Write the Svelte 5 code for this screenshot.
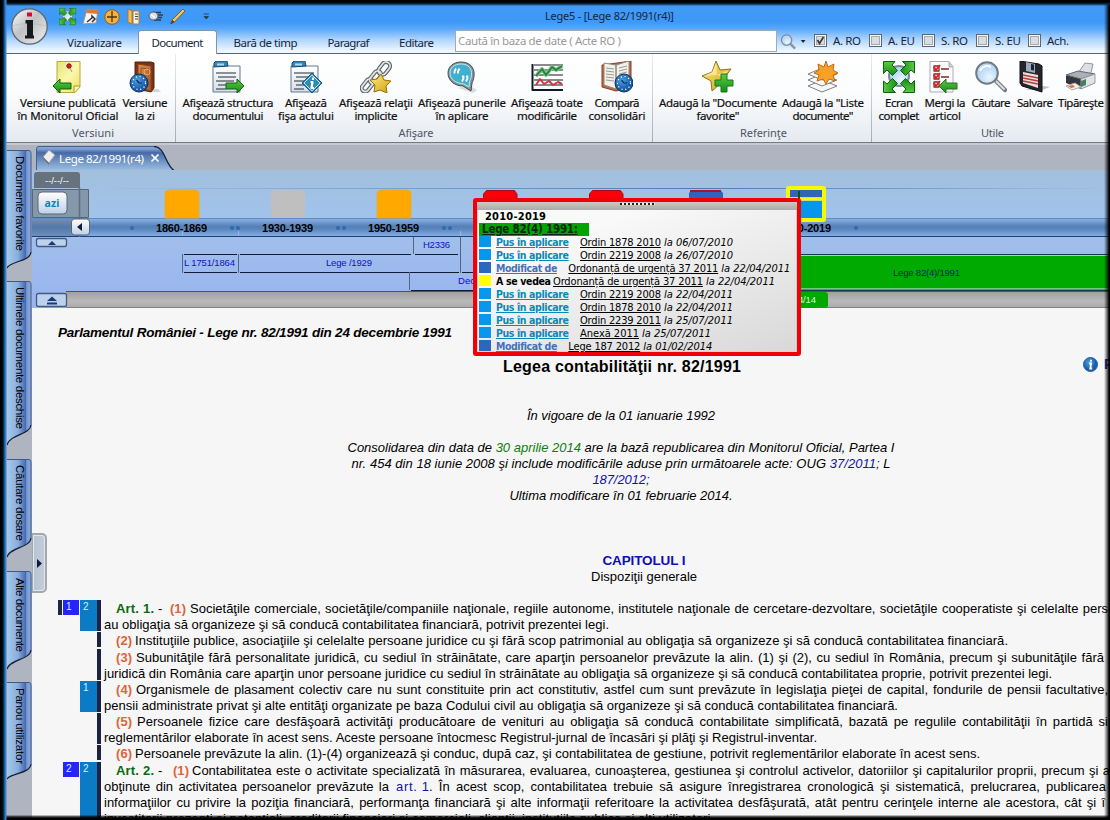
<script>
  // Stretches a text run to a set width, through letter or word spacing.
  function fit(node, opt) {
    const { w, by } = typeof opt === 'number' ? { w: opt, by: 'letter' } : opt;
    const text = node.textContent.trim();
    const diff = w - node.getBoundingClientRect().width;
    if (by === 'word') {
      node.style.wordSpacing = diff / (text.split(/\s+/).length - 1) + 'px';
    } else {
      const s = diff / Math.max(1, text.length - 1);
      node.style.letterSpacing = s + 'px';
      node.style.marginRight = -s + 'px';
    }
  }

  const groups = [
    { cls: 'g1', name: 'Versiuni', nw: 42, items: [
      { w: 108, icon: 'note', l: [['Versiune publicată', 96], ['în Monitorul Oficial', 101]] },
      { w: 46, icon: 'door', l: [['Versiune', 45], ['la zi', 20]] } ] },
    { cls: 'g2', name: 'Afişare', nw: 35, items: [
      { w: 94, icon: 'docArrow', l: [['Afişează structura', 91], ['documentului', 71]] },
      { w: 62, icon: 'docInfo', l: [['Afişează', 42], ['fişa actului', 56]] },
      { w: 78, icon: 'chain', l: [['Afişează relaţii', 74], ['implicite', 43]] },
      { w: 94, icon: 'quote', l: [['Afişează punerile', 88], ['în aplicare', 53]] },
      { w: 76, icon: 'chart', l: [['Afişează toate', 72], ['modificările', 60]] },
      { w: 64, icon: 'book', l: [['Compară', 45], ['consolidări', 57]] } ] },
    { cls: 'g3', name: 'Referinţe', nw: 47, items: [
      { w: 124, icon: 'starPlus', l: [['Adaugă la "Documente', 118], ['favorite"', 43]] },
      { w: 86, icon: 'stack', l: [['Adaugă la "Liste', 82], ['documente"', 61]] } ] },
    { cls: 'g4', name: 'Utile', nw: 23, items: [
      { w: 46, icon: 'expand', l: [['Ecran', 28], ['complet', 41]] },
      { w: 46, icon: 'checks', l: [['Mergi la', 41], ['articol', 32]] },
      { w: 46, icon: 'lens', l: [['Căutare', 39]] },
      { w: 42, icon: 'floppy', l: [['Salvare', 36]] },
      { w: 50, icon: 'printer', l: [['Tipăreşte', 46]] } ] }
  ];

  const tabs = [
    { t: 'Vizualizare', w: 87, f: 55 },
    { t: 'Document', w: 79, f: 52, on: true },
    { t: 'Bară de timp', w: 97, f: 64 },
    { t: 'Paragraf', w: 69, f: 42 },
    { t: 'Editare', w: 67, f: 35 }
  ];

  const checks = [
    { t: 'A. RO', f: 28, w: 55, on: true },
    { t: 'A. EU', f: 27, w: 53 },
    { t: 'S. RO', f: 27, w: 54 },
    { t: 'S. EU', f: 26, w: 52 },
    { t: 'Ach.', f: 22, w: 42 }
  ];

  const rail = [
    { t: 'Documente favorite', gap: 6, h: 119, s: 102, y: 6, f: 95 },
    { t: 'Ultimele documente deschise', gap: 12, h: 165, s: 144, y: 6, f: 142 },
    { t: 'Căutare dosare', gap: 13, h: 99, s: 79, y: 6, f: 76 },
    { t: 'Alte documente', gap: 13, h: 99, s: 79, y: 7, f: 74 },
    { t: 'Panou utilizator', gap: 12, h: 98, s: 82, y: 6, f: 76 }
  ];

  const refs = [
    ['pus', 'Ordin 1878 2010', 81, '06/07/2010'],
    ['pus', 'Ordin 2219 2008', 81, '26/07/2010'],
    ['mod', 'Ordonanță de urgență 37 2011', 150, '22/04/2011'],
    ['see', 'Ordonanță de urgență 37 2011', 150, '22/04/2011'],
    ['pus', 'Ordin 2219 2008', 81, '22/04/2011'],
    ['pus', 'Ordin 1878 2010', 81, '22/04/2011'],
    ['pus', 'Ordin 2239 2011', 81, '25/07/2011'],
    ['pus', 'Anexă 2011', 59, '25/07/2011'],
    ['mod', 'Lege 187 2012', 72, '01/02/2014']
  ];
  const kinds = {
    pus: { t: 'Pus în aplicare', f: 73, gap: 11 },
    mod: { t: 'Modificat de', f: 61, gap: 11 },
    see: { t: 'A se vedea', f: 55, gap: 2 }
  };

  const paras = [
    { h: 32, gap: 0, b: [1, 2], bar: true, lines: [
      { art: 'Art. 1.', aw: 38, n: '(1)', nx: 53, x: 74, w: 918, by: 'word', t: 'Societăţile comerciale, societăţile/companiile naţionale, regiile autonome, institutele naţionale de cercetare-dezvoltare, societăţile cooperatiste şi celelalte pers' },
      { w: 505, t: 'au obligaţia să organizeze şi să conducă contabilitatea financiară, potrivit prezentei legi.' }] },
    { h: 16, gap: 1, lines: [{ n: '(2)', x: 19, w: 873, t: 'Instituţiile publice, asociaţiile şi celelalte persoane juridice cu şi fără scop patrimonial au obligaţia să organizeze şi să conducă contabilitatea financiară.' }] },
    { h: 32, gap: 0, lines: [
      { n: '(3)', x: 20, w: 968, by: 'word', t: 'Subunităţile fără personalitate juridică, cu sediul în străinătate, care aparţin persoanelor prevăzute la alin. (1) şi (2), cu sediul în România, precum şi subunităţile fără' },
      { w: 948, t: 'juridică din România care aparţin unor persoane juridice cu sediul în străinătate au obligaţia să organizeze şi să conducă contabilitatea proprie, potrivit prezentei legi.' }] },
    { h: 32, gap: 0, b: [0, 1], lines: [
      { n: '(4)', x: 20, w: 972, by: 'word', t: 'Organismele de plasament colectiv care nu sunt constituite prin act constitutiv, astfel cum sunt prevăzute în legislaţia pieţei de capital, fondurile de pensii facultative,' },
      { w: 794, t: 'pensii administrate privat şi alte entităţi organizate pe baza Codului civil au obligaţia să organizeze şi să conducă contabilitatea financiară.' }] },
    { h: 32, gap: 0, lines: [
      { n: '(5)', x: 21, w: 971, by: 'word', t: 'Persoanele fizice care desfăşoară activităţi producătoare de venituri au obligaţia să conducă contabilitate simplificată, bazată pe regulile contabilităţii în partidă si' },
      { w: 713, t: 'reglementărilor elaborate în acest sens. Aceste persoane întocmesc Registrul-jurnal de încasări şi plăţi şi Registrul-inventar.' }] },
    { h: 16, gap: 1, lines: [{ n: '(6)', x: 19, w: 845, t: 'Persoanele prevăzute la alin. (1)-(4) organizează şi conduc, după caz, şi contabilitatea de gestiune, potrivit reglementărilor elaborate în acest sens.' }] },
    { h: 64, gap: 0, b: [2, 2], lines: [
      { art: 'Art. 2.', aw: 38, n: '(1)', nx: 56, x: 76, w: 918, by: 'word', t: 'Contabilitatea este o activitate specializată în măsurarea, evaluarea, cunoaşterea, gestiunea şi controlul activelor, datoriilor şi capitalurilor proprii, precum şi a' },
      { parts: [[285, 'obţinute din activitatea persoanelor prevăzute la'], [33, 'art. 1', 7], [677, '. În acest scop, contabilitatea trebuie să asigure înregistrarea cronologică şi sistematică, prelucrarea, publicarea']] },
      { w: 1001, by: 'word', t: 'informaţiilor cu privire la poziţia financiară, performanţa financiară şi alte informaţii referitoare la activitatea desfăşurată, atât pentru cerinţele interne ale acestora, cât şi î' },
      { w: 610, t: 'investitorii prezenţi şi potenţiali, creditorii financiari şi comerciali, clienţii, instituţiile publice şi alţi utilizatori.' }] }
  ];
</script>

{#snippet fourArrows()}
  <circle cx="16" cy="15" r="10" fill="url(#glass)" stroke="#7b8794" stroke-width="2" />
  {#each [0, 90, 180, 270] as a}
    <path transform="rotate({a} 16 16)" d="M.500 .500H12L9 4l5.500 5.500-5 5L4 9 .500 12.500z" fill="url(#grn)" stroke="#0b650e" />
  {/each}
{/snippet}

{#snippet clock(x, y, r)}
  <circle cx={x} cy={y} r={r} fill="url(#ball)" stroke="#0b3260" />
  <circle cx={x} cy={y} r={r - 2.5} fill="none" stroke="#fff" stroke-width="1.2" stroke-dasharray="1.2 2.6" />
  <path d="M{x - 2.5} {y - 3}L{x} {y}h3" fill="none" stroke="#092c5c" stroke-width="1.2" />
{/snippet}

{#snippet sheet()}
  <path d="M1 5h27v26H1z" fill="url(#paper)" stroke="#65778b" />
  <path d="M2 6V2l2-2h11l1 5z" fill="#3685b9" stroke="#164c78" />
  <path d="M5 3.5h7" stroke="#a9daf0" stroke-width="2" />
  <path d="M4 12h20M6 16h18M4 20h18M6 24h14M4 28h10" stroke="#252d36" stroke-width="1.2" />
{/snippet}

{#snippet icon(name)}
  <svg class="ico" width="32" height="32" viewBox="0 0 32 32" fill="none" stroke-linejoin="round">
    {#if name === 'note'}
      <path d="M5 0.5h23V26l-5 5.5H5z" fill="url(#yel)" stroke="#b6a838" />
      <path d="M28 25h-6v6" fill="#fffbc4" stroke="#a89627" />
      <circle cx="17" cy="5" r="2.2" fill="#d4202a" stroke="#861017" /><path d="M18 7l2 4" stroke="#999" />
      <path d="M1 25l7-7v4h11v6H8v4z" fill="url(#grn)" stroke="#12610f" />
    {:else if name === 'door'}
      <path d="M10 28h19l3 3H12z" fill="#999" opacity=".4" />
      <path d="M6 1l16 0 3 1v25l-3 4-16-4z" fill="#723519" stroke="#53240f" />
      <path d="M9 3l13 2v25L9 26z" fill="url(#wood)" stroke="#884319" />
      <path d="M12 7l8 1v7l-8-1zM14 17l6 1v7l-6-1z" stroke="#9a5426" /><circle cx="18" cy="11" r="3" stroke="#efaa70" />
      {@render clock(10, 22, 9)}
    {:else if name === 'docArrow'}
      {@render sheet()}
      <path d="M32 25l-7-7v4H14v6h11v4z" fill="url(#grn)" stroke="#12610f" />
    {:else if name === 'docInfo'}
      {@render sheet()}
      <path d="M22 12l10 10-10 10-10-10z" fill="#3189b7" stroke="#15577f" /><path d="M22 14l8 8-8 8-8-8z" stroke="#bce4f3" />
      <path d="M23 16.5v2.5M20.5 21h2l-1 6h2.5" stroke="#fff" stroke-width="2.2" />
    {:else if name === 'chain'}
      <g stroke="#5d6468" stroke-width="4"><rect x="20" y="1" width="8" height="14" rx="4" transform="rotate(38 25 8)" /><rect x="12" y="9" width="7" height="14" rx="3.500" transform="rotate(38 15 16)" /><rect x="4" y="17" width="7" height="14" rx="3.500" transform="rotate(38 7 24)" /></g>
      <g stroke="#dfe4e6" stroke-width="1.800"><rect x="20" y="1" width="8" height="14" rx="4" transform="rotate(38 25 8)" /><rect x="12" y="9" width="7" height="14" rx="3.500" transform="rotate(38 15 16)" /><rect x="4" y="17" width="7" height="14" rx="3.500" transform="rotate(38 7 24)" /></g>
      <path d="M21 13l3 6 7 1-5 5 1 7-7-3-6 2 1-7-5-5 7-1z" fill="url(#gold)" stroke="#967000" />
    {:else if name === 'quote'}
      <path d="M12 27l15 5 4-3-8-5z" fill="#aaa" opacity=".4" />
      <path d="M15 1c9 0 14 6 13 14-.5 3-1 5-2 7l-1 8-8-5C8 25 2 19 2 12 2 6 7 1 15 1z" fill="#87939b" stroke="#414e58" />
      <path d="M15 3c8 0 11 5 10.500 11-.5 4-1.500 5-2 7l-.5 5-5-3C9 22 4 18 4 12 4 7 8 3 15 3z" fill="#3fb0cd" stroke="#c6e7ed" />
      <path d="M10 7.500l-1.500 3v2M13.500 7.500l-1.500 3v2M16 15.500h1.500v2l-1.500 3M20 15.500h1.500v2l-1.500 3" stroke="#fff" stroke-width="1.800" />
    {:else if name === 'chart'}
      <path d="M3 4h29M3 9h29M3 14h29M3 19h29M3 24h29" stroke="#15191c" stroke-width="1.200" />
      <path d="M1.500 3v26H32" stroke="#111827" stroke-width="2" />
      <path d="M5 15l6-7 4 6 6-8 4 3 6-4" stroke="#7fc48d" stroke-width="4" /><path d="M5 15l6-7 4 6 6-8 4 3 6-4" stroke="#23833d" stroke-width="1.800" /><path d="M5 24l4-6 4 5 5-3 4 4 5-3 4 2" stroke="#cb3943" stroke-width="2" />
    {:else if name === 'book'}
      <path d="M1 4l15-2 14-2v26l-15 4L1 26z" fill="#c16843" stroke="#80412b" />
      <path d="M3 2l12 2v24L3 24zM15 4l13-4v23l-13 5z" fill="#f3f0e7" stroke="#8b887e" />
      <path d="M5 7l8 1M5 10l8 1M5 13l8 1M5 16l8 1M5 19l8 1M18 7l8-2M18 10l8-2M18 13l8-2" stroke="#999" />
      {@render clock(23, 22, 9)}
    {:else if name === 'starPlus'}
      <path d="M14 0l4 9 11-1-6 8 4 9-9-2-8 7-1-10-9-5 10-4z" fill="url(#gold)" stroke="#8c711b" />
      <path d="M14 2l1 12-13 1 8-4zM15 14l12-5-6 7z" fill="#fff8bd" opacity=".6" />
      <path d="M19 13h6v6h6v6h-6v6h-6v-6h-6v-6h6z" fill="url(#grn)" stroke="#137d18" />
    {:else if name === 'stack'}
      {#each [11, 5, -1] as y}<path d="M1 {14 + y}l14-6 15 6-15 6z" fill="#f8f8f8" stroke="#7e8284" />{/each}
      <path d="M19 0l2 6 6-3-1 6 5 3-5 2 2 6-6-2-3 5-3-5-6 2 2-6-5-2 5-3-1-6 6 3z" fill="#f8a126" stroke="#c26912" />
    {:else if name === 'expand'}
      {@render fourArrows()}
    {:else if name === 'checks'}
      <path d="M1 0.500h19l4 5V31H1z" fill="#fbfbfc" stroke="#a9adb3" /><path d="M20 1v5h4" fill="#ccc" stroke="#aaa" />
      {#each [5, 13, 21] as y}<path d="M5 {y}h5v5H5zM12 {y + 3}h8" stroke="#8d2626" stroke-width="1.300" /><path d="M5 {y + 1}l2 3 4-5" stroke="#e31d24" stroke-width="1.800" />{/each}
      <path d="M10 25l7-7v4h11v6H17v4z" fill="url(#grn)" stroke="#2d6b20" />
    {:else if name === 'lens'}
      <path d="M21 20l9 9" stroke="#777e85" stroke-width="4.500" stroke-linecap="round" /><path d="M21 20l8.500 8.500" stroke="#dcdfe2" stroke-width="2" />
      <circle cx="12" cy="12" r="10.800" fill="url(#glass)" stroke="#6f7a86" stroke-width="2" /><path d="M5 10c2-5 7-6 11-4" stroke="#fff" stroke-width="2" />
    {:else if name === 'floppy'}
      <path d="M6 29h17l8-3-7-1z" fill="#888" opacity=".5" />
      <path d="M1 0l19 3 3 2v26L3 25 1 22z" fill="#23262c" stroke="#0f1013" /><path d="M7 1l9 2v9L7 10z" fill="#9daabe" /><path d="M12 3l3 .5v6l-3-.5z" fill="#222" />
      <path d="M4 11l15 3v13L4 22z" fill="#e9e0dd" /><path d="M4 14l15 3M4 17l15 3M4 20l15 3" stroke="#ba3d38" stroke-width="1.600" />
    {:else}
      <path d="M13 12l7-10 8 1-3 13z" fill="#dce0e5" stroke="#92979e" /><path d="M1 15l12-4 17 4v7l-14 6L1 22z" fill="#33373d" />
      <path d="M1 14l12-4 17 3-14 5z" fill="#abb0b8" stroke="#63666e" /><path d="M16 18l14-5v9l-14 6z" fill="#e0e2e5" stroke="#9a9da2" /><path d="M16 20l5-2v6l-5 2z" fill="#4b7d5e" />
      <path d="M1 25l9-3 6 4-9 3z" fill="#f7f0e8" stroke="#aaa" /><path d="M3 25l5-1 2 2-4 1z" fill="#ee682b" />
    {/if}
  </svg>
{/snippet}

<div class="app">
  <svg class="defs" width="0" height="0" aria-hidden="true">
    <defs>
      <linearGradient id="yel" x2="1" y2="1"><stop stop-color="#e6e277" /><stop offset=".5" stop-color="#fbf8ad" /><stop offset="1" stop-color="#eadf62" /></linearGradient>
      <linearGradient id="grn" x2="0" y2="1"><stop stop-color="#5ccc44" /><stop offset="1" stop-color="#168a17" /></linearGradient>
      <linearGradient id="wood" x2="1" y2="1"><stop stop-color="#d98d52" /><stop offset="1" stop-color="#ad5b27" /></linearGradient>
      <linearGradient id="gold" x2="1" y2="1"><stop stop-color="#ffee80" /><stop offset="1" stop-color="#cf9d13" /></linearGradient>
      <linearGradient id="paper" x2="0" y2="1"><stop stop-color="#fff" /><stop offset="1" stop-color="#d5dde6" /></linearGradient>
      <radialGradient id="ball" cx=".4" cy=".35"><stop stop-color="#49a2e5" /><stop offset="1" stop-color="#1a5ba4" /></radialGradient>
      <radialGradient id="glass" cx=".6" cy=".7"><stop stop-color="#e9f6ff" /><stop offset="1" stop-color="#b8d8f5" /></radialGradient>
      <linearGradient id="silver" x2="1" y2="1"><stop stop-color="#fff" /><stop offset=".45" stop-color="#bfc1c4" /><stop offset="1" stop-color="#efefef" /></linearGradient>
      <linearGradient id="sky" x2="0" y2="1"><stop stop-color="#a2bfdd" /><stop offset="1" stop-color="#a1c4ec" /></linearGradient>
      <linearGradient id="band" x2="0" y2="1"><stop stop-color="#91b6e8" /><stop offset=".45" stop-color="#5380b7" /><stop offset=".6" stop-color="#5c88c0" /><stop offset="1" stop-color="#8bb2e9" /></linearGradient>
      <linearGradient id="low" x2="0" y2="1"><stop stop-color="#a1bfea" /><stop offset="1" stop-color="#9ab6f0" /></linearGradient>
      <linearGradient id="scroll" x2="0" y2="1"><stop stop-color="#9e9e9e" /><stop offset=".6" stop-color="#b9b9b9" /><stop offset="1" stop-color="#aaa" /></linearGradient>
      <linearGradient id="side"><stop stop-color="#a6c8ea" /><stop offset=".45" stop-color="#8aaede" /><stop offset=".78" stop-color="#4669ac" /><stop offset=".82" stop-color="#7798d4" /><stop offset="1" stop-color="#8aaae0" /></linearGradient>
      <linearGradient id="doctab" x2="0" y2="1"><stop stop-color="#8cadde" /><stop offset=".12" stop-color="#7998cc" /><stop offset=".25" stop-color="#476ba8" /><stop offset="1" stop-color="#9fc1e4" /></linearGradient>
      <linearGradient id="btn" x2="0" y2="1"><stop stop-color="#fff" /><stop offset="1" stop-color="#bed0e6" /></linearGradient>
      <linearGradient id="fade"><stop stop-color="#a2c1e2" /><stop offset=".35" stop-color="#6f9cce" /><stop offset=".6" stop-color="#4c7db8" /><stop offset=".75" stop-color="#6895c9" /><stop offset="1" stop-color="#a2c1e2" /></linearGradient>
    </defs>
  </svg>

  <header>
    <svg class="logo" width="38" height="38" viewBox="0 0 38 38">
      <circle cx="19.500" cy="19.500" r="17.700" fill="url(#silver)" stroke="#5c6773" stroke-width="1.300" />
      <path d="M2 19q17-5 34 0" stroke="#aaa" fill="none" opacity=".4" />
      <path d="M17 5.500h5v4h-5z" fill="#d7092e" /><path d="M15.500 13h7.500v18.500h-6V16.500h-1.500zM15 28.500h9v3h-9z" fill="#17181b" />
    </svg>
    <div class="quick">
      <svg width="156" height="18" viewBox="0 0 156 18" fill="none">
        <g transform="scale(.53)">{@render fourArrows()}</g>
        <g transform="translate(23 0)"><path d="M5 1l11 1-2 13-13 1z" fill="#f6f6f4" stroke="#999" /><path d="M5 1l11 1v4L4 5z" fill="#db7a31" /><path d="M5 14l5-4V8l3 3-3 3" stroke="#333" stroke-width="1.500" /></g>
        <g transform="translate(45 1)"><circle cx="8" cy="8" r="7.300" fill="#f5b13c" stroke="#9b5912" /><path d="M8 2v11M3 8h10" stroke="#4c340d" stroke-width="1.300" /></g>
        <g transform="translate(68 0)"><path d="M1 1l4 2v13l-4-2z" fill="#f6c164" stroke="#b97414" /><path d="M6 3h6v13H6z" fill="#f6f2ea" stroke="#bb7820" /><path d="M8 6h3M8 8.500h3M8 11h3" stroke="#444" /></g>
        <g transform="translate(89 1)"><path d="M5 3.500h8M4 6h11M8 8.500h6M6 11h7" stroke="#333b45" stroke-width="1.500" /><ellipse cx="5.500" cy="7" rx="4.500" ry="4" fill="#d8dce0" stroke="#59616a" /><path d="M3 5.500l4 3" stroke="#fff" stroke-width="1.500" /></g>
        <g transform="translate(111 1)"><path d="M.500 15l2-4.500L13 0l2 2L4.500 13z" fill="#f2c469" stroke="#805d25" /><path d="M.500 15l2-4 2 2z" fill="#4a3b25" /></g>
        <path d="M144.500 7h5.500M145 9.500h4.500l-2.200 2.500z" stroke="#29394d" fill="#29394d" stroke-width=".8" transform="translate(0 -1)" />
      </svg>
      <span class="title"><span use:fit={129}>Lege5 - [Lege 82/1991(r4)]</span></span>
    </div>
    <div class="tabs">
      {#each tabs as t}<div class="tab" class:on={t.on} style:width="{t.w}px"><span use:fit={t.f}>{t.t}</span></div>{/each}
      <div class="search"><span use:fit={163}>Caută în baza de date ( Acte RO )</span></div>
      <svg class="find" width="36" height="18" viewBox="0 0 36 18"><path d="M10 10l6 6" stroke="#8a95a3" stroke-width="2.500" /><circle cx="7" cy="7" r="5.500" fill="url(#glass)" stroke="#7b8aa0" stroke-width="1.300" /><path d="M22 7h5l-2.500 3z" fill="#222" /></svg>
      {#each checks as c}
        <div class="chk" style:width="{c.w}px"><i>{#if c.on}<svg width="9" height="9" viewBox="0 0 9 9"><path d="M1.500 4l2 3.500L7.500 1" fill="none" stroke="#333" stroke-width="1.600" /></svg>{/if}</i><span use:fit={c.f}>{c.t}</span></div>
      {/each}
    </div>
  </header>

  <section class="ribbon">
    {#each groups as g}
      <div class="group {g.cls}">
        <div class="btns">
          {#each g.items as b}
            <div class="rb" style:width="{b.w}px">{@render icon(b.icon)}{#each b.l as [t, w]}<div class="lb"><span use:fit={w}>{t}</span></div>{/each}</div>
          {/each}
        </div>
        <div class="gname"><span use:fit={g.nw}>{g.name}</span></div>
      </div>
    {/each}
  </section>

  <div class="work">
    <nav class="rail">
      {#each rail as r}
        <svg width="25" height={r.h} style:margin-top="{r.gap}px">
          <path d="M0 .5H22q2 0 2 3V{r.s}c-1 10-21 9-24 {r.h - r.s - 1}z" fill="url(#side)" />
          <path d="M0 .5H22q2 0 2 3V{r.s}" fill="none" stroke="#405a85" /><path d="M24 {r.s}c-1 10-21 9-24 {r.h - r.s - 1}" fill="none" stroke="#111c33" stroke-width="1.200" />
          <text transform="translate(8.500 {r.y}) rotate(90)" textLength={r.f} font-size="11.500">{r.t}</text>
        </svg>
      {/each}
    </nav>

    <main>
      <div class="strip">
        <svg width="142" height="25" viewBox="0 0 142 25">
          <path d="M.5 25V3Q.5.500 3 .5H118c11 0 11 18 20 24z" fill="url(#doctab)" />
          <path d="M.5 25V3Q.5.500 3 .5H118" fill="none" stroke="#43628f" /><path d="M118 .5c11 0 11 18 20 24" fill="none" stroke="#15213a" stroke-width="1.300" />
          <path d="M7 11l6-7 6 5-6 8z" fill="#eee" stroke="#9a9a9a" /><path d="M7 11l6 6v2l-6-6z" fill="#777" />
          <text x="23" y="16.500" textLength="85" font-size="11.500" fill="#fff" class="noto">Lege 82/1991(r4)</text>
          <path d="M115.500 8.500l7 7M122.500 8.500l-7 7" stroke="#fff" stroke-width="1.700" />
        </svg>
      </div>

      <svg class="timeline" width="1078" height="138" viewBox="32 170 1078 138">
        <rect x="32" y="170" width="1078" height="49" fill="url(#sky)" /><rect x="89" y="188" width="1021" height="1" fill="url(#fade)" />
        <rect x="32" y="218" width="1078" height="19" fill="url(#band)" /><path d="M32 218.500H1110" stroke="#5b8bc4" /><path d="M32 236.500H1110" stroke="#1c4379" />
        <rect x="32" y="237" width="1078" height="55" fill="url(#low)" />
        <rect x="32" y="292" width="40" height="16" fill="#9ab6f0" /><rect x="66" y="291" width="1044" height="17" fill="url(#scroll)" /><path d="M66 291.500H1110M66 308H1110" stroke="#545454" />
        <path d="M34 188v-13q0-3 3-3h40q3 0 3 3v13z" fill="#66727e" />
        <path d="M32.500 189.500h56v28h-56z" fill="#8597ab" stroke="#5b6675" /><path d="M32 219h48v17H32z" fill="#58759e" opacity=".55" /><path d="M79.500 187v50" stroke="#626e7e" stroke-width="1.500" />
        <text x="45" y="183.500" textLength="24" font-size="9.500" fill="#fff">--/--/--</text>
        <rect x="38" y="192" width="29" height="22" rx="4" fill="url(#btn)" stroke="#5b6878" /><text x="44.500" y="207" textLength="15" font-size="10.500" font-weight="700" fill="#0b86ac" class="noto">azi</text>
        <rect x="71.500" y="219" width="18" height="16" rx="3" fill="url(#btn)" stroke="#566577" /><path d="M82 223v8l-5-4z" fill="#111d35" />
        {#each [[239, 8], [294, 13]] as [y, h]}<rect x="36.500" y={y - .5} width="30" height={h} rx="2" fill="#bdd0ec" stroke="#425b80" stroke-width="1.300" />{/each}
        <path d="M48 245h8l-4-4zM47 301h10l-5-4.500zM47 302.500h10v2h-10z" fill="#163b73" />

        <path d="M165 218v-24q0-4 4-4h26q4 0 4 4v24zM377 218v-24q0-4 4-4h26q4 0 4 4v24z" fill="#ffa800" stroke="#dfae37" />
        <path d="M271 218v-24q0-4 4-4h26q4 0 4 4v24z" fill="#bfbfbf" />
        <path d="M483.500 206v-12l3-3.500h28l2.500 3.500v12zM589.500 206v-12l3-3.500h28l2.500 3.500v12z" fill="#fb0007" stroke="#a80d18" />
        <path d="M689 206v-13l3-3h28l3 3v13z" fill="#3263bb" /><path d="M690 191h31" stroke="#a8132a" stroke-width="2" />
        <rect x="788" y="188" width="36" height="32" fill="none" stroke="#f6f900" stroke-width="4" rx="1" />
        <path d="M790 190h32v7h-32z" fill="#3065b5" /><path d="M788 199h36" stroke="#f6f900" stroke-width="3" /><path d="M790 201h32v17h-32z" fill="#0795ef" /><path d="M799 191v10" stroke="#07590a" stroke-width="2" />
        <g font-size="11" font-weight="700"><text x="156" y="231.500" textLength="51">1860-1869</text><text x="262" y="231.500" textLength="51">1930-1939</text><text x="368" y="231.500" textLength="51">1950-1959</text><text x="780" y="231.500" textLength="51">2010-2019</text></g>
        {#each [132, 232, 238, 338, 344, 444, 450, 856] as x}<circle cx={x} cy="228" r="2" fill="#3168b2" />{/each}
        <path d="M184 254.500h53M184 272.500h53M240 254.500h171M415 254.500h43M240 272.500h219M411 290.500h70M462 272.500h20" stroke="#111c34" />
        <path d="M182.500 254v19M238.500 254v19M413.500 237v17M460.500 237v36M409.500 272v18" stroke="#53667f" />
        <path d="M182.500 231v4M238.500 231v4M411 231v4M460.500 231v5" stroke="#c8b7ea" opacity=".7" />
        <g font-size="9.500" fill="#1010c8"><text x="184" y="266" textLength="51">L 1751/1864</text><text x="326" y="266" textLength="46">Lege /1929</text><text x="423" y="248" textLength="27">H2336</text><text x="458" y="284" textLength="17">Dec</text></g>
        <path d="M790 255h320v35H790z" fill="#00aa00" /><path d="M790 254.500h320M790 290.500h320" stroke="#183953" /><path d="M790 255.500h320M790 288.800h320" stroke="#9fdcae" />
        <text x="893" y="275.500" textLength="67" font-size="9.500" fill="#062b58">Lege 82(4)/1991</text>
        <path d="M780 292h45q3 0 3 3v10q0 3-3 3h-45z" fill="#00a900" /><text x="798" y="303" textLength="18" font-size="9.500" fill="#d5ffd0">4/14</text>
      </svg>

      <article>
        <div class="ln src"><span use:fit={394}>Parlamentul României - Lege nr. 82/1991 din 24 decembrie 1991</span></div>
        <div class="ln head"><span use:fit={238}>Legea contabilităţii nr. 82/1991</span>
          <div class="info"><svg width="15" height="15" viewBox="0 0 15 15"><circle cx="7.500" cy="7.500" r="7" fill="url(#ball)" stroke="#1c64ad" /><path d="M8 2.800v2M6 6.500h2.200l-1 5h2" fill="none" stroke="#fff" stroke-width="1.800" /></svg><b>P</b></div>
        </div>
        <div class="ln ital v"><span use:fit={188}>În vigoare de la 01 ianuarie 1992</span></div>
        <div class="ln ital c"><span use:fit={547}>Consolidarea din data de <em class="gr">30 aprilie 2014</em> are la bază republicarea din Monitorul Oficial, Partea I</span></div>
        <div class="ln ital"><span use:fit={539}>nr. 454 din 18 iunie 2008 şi include modificările aduse prin următoarele acte: OUG <em class="bl">37/2011;</em> L</span></div>
        <div class="ln ital bl"><span use:fit={57}>187/2012;</span></div>
        <div class="ln ital"><span use:fit={223}>Ultima modificare în 01 februarie 2014.</span></div>
        <div class="ln cap"><span use:fit={83}>CAPITOLUL I</span></div>
        <div class="ln disp"><span use:fit={106}>Dispoziţii generale</span></div>

        <div class="paras">
          {#each paras as p}
            <div class="para" style:height="{p.h}px" style:margin-bottom="{p.gap}px">
              <div class="marks">
                <i class="edge" class:show={p.bar}></i>
                <b class="m1" class:show={p.b && p.b[0]}>{p.b ? p.b[0] || '' : ''}</b>
                <b class="m2" class:show={p.b}>{p.b ? p.b[1] : ''}</b>
                <i class="bar"></i>
              </div>
              <div class="txt">
                {#each p.lines as l}
                  <div class="tl">
                    {#if l.parts}
                      {#each l.parts as [w, t, gap]}<span class:bl={gap} style:margin-left="{gap || 0}px" use:fit={{ w, by: gap ? 'letter' : 'word' }}>{t}</span>{/each}
                    {:else}
                      {#if l.n}
                        <div class="lead" style:width="{l.x + 12}px">
                          {#if l.art}<b class="art"><span use:fit={l.aw}>{l.art}</span></b><span class="dash">-</span>{/if}
                          <b class="num" style:margin-left={l.art ? 'auto' : '0'} style:margin-right={l.art ? l.x - l.nx - 17 + 'px' : '0'}><span use:fit={16}>{l.n}</span></b>
                        </div>
                      {/if}
                      <span use:fit={{ w: l.w, by: l.by || 'letter' }}>{l.t}</span>
                    {/if}
                  </div>
                {/each}
              </div>
            </div>
          {/each}
        </div>
      </article>
    </main>
  </div>

  <div class="handle"><svg width="5" height="9"><path d="M0 0l5 4.500L0 9z" fill="#101d3a" /></svg></div>

  <aside class="popup">
    <div class="grip"><i></i></div>
    <div class="dec"><span use:fit={61}>2010-2019</span></div>
    <div class="law"><span use:fit={96}>Lege 82(4) 1991:</span></div>
    {#each refs as [k, t, w, d]}
      <div class="ref {k}"><i></i><b style:margin-right="{kinds[k].gap}px"><span use:fit={kinds[k].f}>{kinds[k].t}</span></b><u><span use:fit={w}>{t}</span></u><em><span use:fit={69}>la {d}</span></em></div>
    {/each}
  </aside>
  <div class="frame"></div>
</div>

<style>
  :global(body) { margin: 0; }
  .app { position: relative; width: 1110px; height: 820px; overflow: hidden; display: flex; flex-direction: column; background: #aeb4c0; color: #000; font-family: "Liberation Sans", Arial, sans-serif; }
  .app * { box-sizing: border-box; }
  .defs { position: absolute; }
  span { display: inline-block; white-space: pre; flex: none; }
  svg { display: block; flex: none; }
  svg text { font-family: "Liberation Sans", Arial, sans-serif; }
  svg text.noto { font-family: "Noto Sans", sans-serif; }

  header { height: 54px; flex: none; font: 12px/16px "Noto Sans", sans-serif; color: #17263c; background: linear-gradient(#439bf5 4px, #3d98f7 22px, #5ba9fa 29px, #b2d6fd 40px, #eef6ff 51px); border-bottom: 1px solid #55687b; padding-left: 7px; }
  .logo { position: absolute; left: 10px; top: 7px; }
  .quick { height: 30px; display: flex; align-items: flex-start; padding: 8px 0 0 52px; }
  .title { margin-left: 330px; font-size: 11px; }
  .tabs { height: 23px; display: flex; padding-left: 44px; align-items: center; }
  .tab { display: flex; justify-content: center; height: 23px; padding-top: 5px; flex: none; font-size: 11.5px; }
  .tab.on { height: 24px; margin-bottom: -1px; background: #fff; border: 1px solid #8294aa; border-bottom: 0; border-radius: 3px 3px 0 0; padding-top: 4px; }
  .search { width: 322px; height: 22px; margin: -1px 3px 0 5px; border: 1px solid #a0abba; background: #fff; color: #999; padding: 1px 2px; font-size: 11.5px; line-height: 17px; flex: none; }
  .find { width: 34px; }
  .chk { display: flex; align-items: center; gap: 6px; font-size: 11.5px; flex: none; height: 18px; margin-top: -2px; }
  .chk i { width: 13px; height: 13px; border: 1px solid #5e6670; background: #d9dce0; box-shadow: inset 0 0 0 1px #f6f6f6, inset 0 0 0 2px #a4abb3; display: grid; place-items: center; flex: none; }

  .ribbon { height: 88px; flex: none; display: flex; padding-left: 7px; background: linear-gradient(#fff, #fbfcfd 45%, #e5eaf0); font-family: "Noto Sans", sans-serif; }
  .group { padding-top: 7px; border: solid; border-image: linear-gradient(#eee, #a3abb5) 1; border-width: 0 1px 0 0; flex: none; }
  .g1 { width: 169px; } .g1 .btns { padding-left: 7px; }
  .g2 { width: 477px; } .g2 .btns { padding-left: 5px; }
  .g3 { width: 219px; } .g3 .btns { padding-left: 3px; }
  .g4 { width: 238px; border: 0; } .g4 .btns { padding-left: 4px; }
  .g3 .gname, .g4 .gname { padding: 0 0 0 3px; }
  .btns { display: flex; height: 63px; }
  .rb { display: flex; flex-direction: column; align-items: center; flex: none; }
  .ico { margin-bottom: 3px; }
  .lb { display: flex; font-size: 11.5px; line-height: 13px; height: 13px; color: #101010; -webkit-text-stroke: .2px #101010; }
  .gname { display: flex; justify-content: center; font-size: 11px; line-height: 16px; padding-top: 1px !important; color: #4b5668; padding-left: 4px; }

  .work { display: flex; flex: 1; min-height: 0; padding-left: 7px; border-top: 1px solid #737a85; box-shadow: inset 0 2px #c4c9d2; }
  .rail { width: 25px; flex: none; padding-top: 1px; }
  main { flex: 1; min-width: 0; display: flex; flex-direction: column; }
  .strip { height: 27px; padding: 3px 0 0 4px; flex: none; }
  .timeline { flex: none; }
  article { flex: 1; min-height: 0; overflow: hidden; background: #f6f6f6; padding-top: 16px; font-size: 13px; line-height: 16px; }
  .ln { height: 16px; display: flex; justify-content: center; width: 1178px; padding-top: 1px; }
  .src { justify-content: flex-start; padding-left: 26px; font-weight: 700; font-style: italic; font-size: 13.5px; }
  .head { margin-top: 18px; font-size: 16px; font-weight: 700; position: relative; padding-left: 2px; }
  .info { position: absolute; left: 1051px; top: -2px; display: flex; gap: 6px; align-items: center; color: #1c2e99; font-size: 14px; }
  .ital { font-style: italic; }
  .ital.v { margin-top: 33px; }
  .ital.c { margin-top: 16px; }
  .gr { color: #107c10; }
  .bl { color: #1212a8; }
  .cap { margin-top: 49px; padding-left: 46px; font-weight: 700; color: #0d0dc0; font-size: 13.5px; }
  .disp { padding-left: 46px; }
  .paras { margin-top: 16px; padding-left: 26px; }
  .para { display: flex; }
  .marks { display: flex; width: 46px; flex: none; align-items: stretch; }
  .edge { width: 4px; height: 15px; margin-right: 1px; } .edge.show { background: #202849; }
  .marks b { font-weight: 400; font-size: 10px; line-height: 13px; color: #d9ecff; padding-left: 3px; }
  .m1 { width: 16px; height: 15px; margin-right: 1px; } .m1.show { background: #2525fb; }
  .m2 { width: 17px; margin-bottom: 1px; } .m2.show { background: #0b7bc5; }
  .bar { width: 4px; background: #1c2242; margin-bottom: 1px; }
  .tl { height: 16px; display: flex; padding-top: 1px; }
  .lead { display: flex; padding-left: 12px; flex: none; }
  .art { color: #0a6a10; font-size: 13px; }
  .dash { margin-left: 4px; }
  .num { color: #e0623a; }

  .handle { position: absolute; left: 32px; top: 533px; width: 15px; height: 60px; border: 2px solid #a4a8ad; border-left-width: 1px; border-radius: 0 5px 5px 0; background: linear-gradient(90deg, #b6c3d2, #c3ced9); box-shadow: inset 0 0 0 1px #e1e6eb; display: grid; place-items: center; }
  .popup { position: absolute; left: 473px; top: 198px; width: 328px; height: 158px; border: 4px solid #f00007; border-radius: 3px; background: linear-gradient(160deg, #f9f9f9 25%, #d8d8d8); box-shadow: inset 0 0 0 1px #f8c5c5; font: 11px/13px "DejaVu Sans Condensed", "DejaVu Sans", sans-serif; font-stretch: condensed; overflow: hidden; }
  .grip { height: 8px; background: linear-gradient(#c9c9c9, #aaa); display: flex; justify-content: center; }
  .grip i { width: 35px; height: 2px; margin-top: 1px; background: repeating-linear-gradient(90deg, #222 0 2px, #eee 2px 4px); }
  .dec { height: 13px; padding-left: 8px; font-weight: 700; display: flex; font-size: 11px; }
  .law { width: 110px; height: 13px; margin-left: 2px; padding-left: 3px; background: #00a600; display: flex; font-weight: 700; text-decoration: underline; font-size: 11.5px; color: #07260a; }
  .ref { height: 13px; display: flex; padding-left: 2px; }
  .ref i { width: 12px; height: 11px; margin: 0 5px 0 0; flex: none; }
  .ref b span, .ref u span { text-decoration: underline; }
  .ref b, .ref u, .ref em { display: flex; flex: none; }
  .ref b { font-size: 10.5px; }
  .ref u { text-decoration: none; }
  .ref em { margin-left: 3px; }
  .pus i { background: #0797ec; } .pus b { color: #0c89b4; }
  .mod i { background: #2868bd; } .mod b { color: #4670b8; }
  .see i { background: #ffff00; } .see b span { text-decoration: none; }
  .frame { position: absolute; inset: 0; pointer-events: none; background: linear-gradient(90deg, #000 1px, #051322 3px, #2272bd 5px, #3d8edb 6px, transparent 7px), linear-gradient(#000 2px, #0b294a 4px, transparent 6px), linear-gradient(270deg, #000 1px, #0008 3px, transparent 6px), linear-gradient(0deg, #000 2px, #0008 4px, transparent 5px); }
</style>
